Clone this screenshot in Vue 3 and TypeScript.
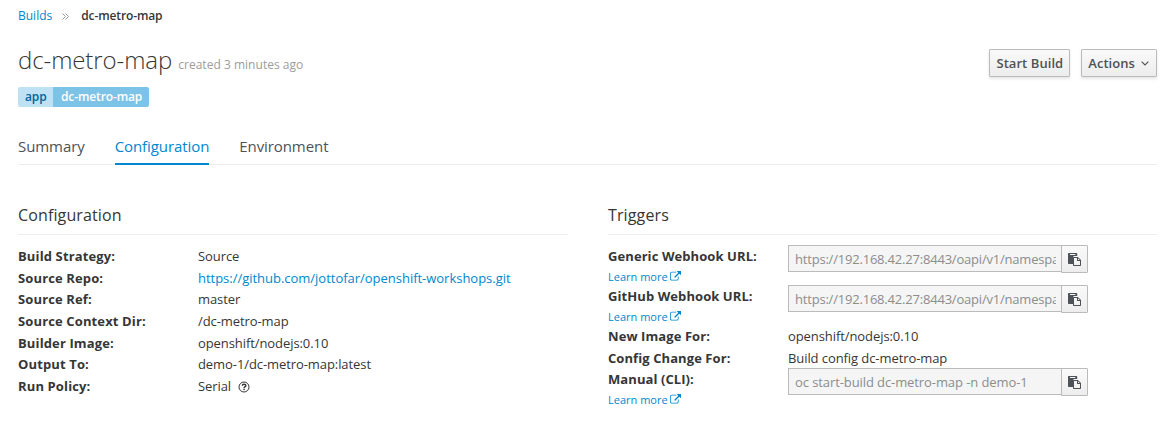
<script setup lang="ts">
interface Detail { label: string; value: string; link?: boolean; help?: boolean }
interface Trigger { label: string; value: string; copy?: boolean; url?: boolean }

const tabs: string[] = ['Summary', 'Configuration', 'Environment']
const activeTab = 'Configuration'

const details: Detail[] = [
  { label: 'Build Strategy:', value: 'Source' },
  { label: 'Source Repo:', value: 'https://github.com/jottofar/openshift-workshops.git', link: true },
  { label: 'Source Ref:', value: 'master' },
  { label: 'Source Context Dir:', value: '/dc-metro-map' },
  { label: 'Builder Image:', value: 'openshift/nodejs:0.10' },
  { label: 'Output To:', value: 'demo-1/dc-metro-map:latest' },
  { label: 'Run Policy:', value: 'Serial', help: true },
]

const triggers: Trigger[] = [
  { label: 'Generic Webhook URL:', value: 'https://192.168.42.27:8443/oapi/v1/namespaces/demo-1/buildconfigs', copy: true, url: true },
  { label: 'GitHub Webhook URL:', value: 'https://192.168.42.27:8443/oapi/v1/namespaces/demo-1/buildconfigs', copy: true, url: true },
  { label: 'New Image For:', value: 'openshift/nodejs:0.10' },
  { label: 'Config Change For:', value: 'Build config dc-metro-map' },
  { label: 'Manual (CLI):', value: 'oc start-build dc-metro-map -n demo-1', copy: true },
]
</script>

<template>
  <main class="page">
    <nav class="breadcrumb">
      <a class="link">Builds</a>
      <svg class="separator" viewBox="0 0 7 7"><path d="M.5.5l3 3-3 3M3.500.5l3 3-3 3" /></svg>
      <strong>dc-metro-map</strong>
    </nav>

    <header class="header">
      <h1>dc-metro-map <small>created 3 minutes ago</small></h1>
      <div class="actions">
        <button class="btn">Start Build</button>
        <button class="btn">Actions
          <svg class="caret" viewBox="0 0 8 5"><path d="M.6.6L4 4 7.400.6" /></svg>
        </button>
      </div>
    </header>

    <div class="label"><span class="label-key">app</span><span class="label-value">dc-metro-map</span></div>

    <ul class="tabs">
      <li v-for="tab in tabs" :key="tab" :class="{ active: tab === activeTab }">{{ tab }}</li>
    </ul>

    <div class="columns">
      <section>
        <h2>Configuration</h2>
        <dl class="details">
          <div v-for="item in details" :key="item.label" class="row">
            <dt>{{ item.label }}</dt>
            <dd>
              <a v-if="item.link" class="link repo">{{ item.value }}</a>
              <template v-else>{{ item.value }}</template>
              <svg v-if="item.help" class="help" viewBox="0 0 12 12">
                <circle cx="6" cy="6" r="5" />
                <path class="hook" d="M4.200 4.800C4.300 3.700 5 3.300 6 3.300c1.100 0 1.900.5 1.900 1.400C7.900 5.700 6.300 5.700 6.100 7" />
                <rect x="5.300" y="7.700" width="1.500" height="1.400" />
              </svg>
            </dd>
          </div>
        </dl>
      </section>

      <section>
        <h2>Triggers</h2>
        <dl>
          <div v-for="item in triggers" :key="item.label" class="row">
            <dt>
              {{ item.label }}
              <a v-if="item.copy" class="link learn">Learn more
                <svg class="external" viewBox="0 0 1792 1792"><path d="M1408 928v320q0 119-84.500 203.500t-203.500 84.500h-832q-119 0-203.500-84.500t-84.500-203.500v-832q0-119 84.500-203.500t203.500-84.500h704q14 0 23 9t9 23v64q0 14-9 23t-23 9h-704q-66 0-113 47t-47 113v832q0 66 47 113t113 47h832q66 0 113-47t47-113v-320q0-14 9-23t23-9h64q14 0 23 9t9 23zm384-864v512q0 26-19 45t-45 19-45-19l-176-176-652 652q-10 10-23 10t-23-10l-114-114q-10-10-10-23t10-23l652-652-176-176q-19-19-19-45t19-45 45-19h512q26 0 45 19t19 45z" /></svg>
              </a>
            </dt>
            <dd>
              <div v-if="item.copy" class="copy">
                <input type="text" readonly :class="{ url: item.url }" :value="item.value">
                <button class="copy-btn" aria-label="Copy">
                  <svg viewBox="0 0 13 13"><path fill-rule="evenodd" d="M.7 0h7.800q.7 0 .7.7V3H6.200q-.9 0-.9.900V11H.7Q0 11 0 10.300V.7Q0 0 .7 0zM2 1v1h5.300V1z" /><path fill-rule="evenodd" d="M5.700 4h4.200L13 7.100v5.200q0 .7-.7.700H5.700q-.7 0-.7-.7V4.700Q5 4 5.700 4zM6 5v7h6V8H9V5zM10 5.300V7h1.700z" /></svg>
                </button>
              </div>
              <template v-else>{{ item.value }}</template>
            </dd>
          </div>
        </dl>
      </section>
    </div>
  </main>
</template>

<style>
body { background: #fff; overflow: hidden; }
</style>

<style scoped>
* { box-sizing: border-box; }
.page {
  height: 421px;
  padding: 6px 11px 0 18px;
  color: #363636;
  font: 13px/1.66667 "Open Sans", sans-serif;
}
.link { color: #0088ce; }
.breadcrumb { display: flex; align-items: center; height: 20px; font-size: 12px; }
.breadcrumb strong { font-weight: 600; letter-spacing: -.12px; }
.separator { width: 7px; height: 7px; margin: 1px 12px 0 10px; fill: none; stroke: #9c9c9c; }
.header { display: flex; justify-content: space-between; height: 61px; padding-top: 19px; }
h1 { margin: 0; font-size: 24px; font-weight: 300; line-height: 29px; white-space: nowrap; letter-spacing: -.09px; }
h1 small { color: #9c9c9c; font-size: 12px; font-weight: 400; letter-spacing: .02px; }
.actions { display: flex; gap: 11px; padding-top: 4px; }
.btn {
  display: flex; align-items: center; height: 28px; padding: 0 6px;
  border: 1px solid #bbb; border-radius: 1px;
  background: linear-gradient(#fafafa, #ededed);
  box-shadow: 0 2px 3px rgba(3, 3, 3, .1);
  color: #4d5258; font: 600 13px/20px "Open Sans", sans-serif; letter-spacing: .06px;
}
.caret { width: 8px; height: 5px; margin: 1px 1px 0 6px; fill: none; stroke: #4d5258; stroke-width: 1.100; }
.label { display: flex; width: fit-content; height: 20px; font-size: 12px; font-weight: 600; line-height: 19px; border-radius: 2px; overflow: hidden; letter-spacing: -.12px; }
.label-key { width: 35px; padding-left: 7px; background: #bee1f4; color: #00659c; }
.label-value { width: 96px; padding-left: 8px; background: #7dc3e8; color: #fff; }
.tabs { display: flex; gap: 30px; height: 38px; margin: 20px 0 0; padding: 0; border-bottom: 1px solid #ededed; list-style: none; font-size: 15px; line-height: 39px; color: #4d5258; letter-spacing: -.08px; }
.tabs li { height: 38px; }
.tabs .active { color: #0088ce; border-bottom: 2px solid #0088ce; }
.columns { display: grid; grid-template-columns: 550px 549px; gap: 40px; margin-top: 38px; }
h2 { height: 32px; margin: 0 0 11.067px; border-bottom: 1px solid #ededed; font-size: 16px; font-weight: 400; line-height: 25px; letter-spacing: .13px; }
dl, dd { margin: 0; }
.row { display: grid; grid-template-columns: 180px 1fr; }
dt { font-weight: 700; letter-spacing: .08px; }
.details dt { letter-spacing: .13px; }
dd { letter-spacing: -.08px; }
.repo { letter-spacing: -.02px; }
.learn { display: block; font-size: 11px; font-weight: 400; letter-spacing: 0; }
.external { width: 11px; height: 11px; fill: currentColor; vertical-align: -1px; }
.help { width: 12px; height: 12px; margin-left: 6.500px; vertical-align: -2px; fill: #363636; }
.help circle, .help .hook { fill: none; stroke: #363636; stroke-width: 1; }
.help .hook { stroke-width: 1.400; }
.copy { display: flex; height: 21.667px; margin-top: -1px; }
input {
  width: 274px; height: 27px; padding: 1px 6px 0; border: 1px solid #bbb; border-right: 0; border-radius: 0; outline: 0;
  background: #f5f5f5; color: #8b8d8f; font: 13px/20px "Open Sans", sans-serif; letter-spacing: -.09px;
}
input.url { letter-spacing: -.2px; }
.copy-btn { display: grid; place-items: center; width: 27px; height: 28px; margin-left: -1px; padding: 0; border: 1px solid #bbb; border-radius: 0 1px 1px 0; background: linear-gradient(#fafafa, #ededed); }
.copy-btn svg { width: 13px; height: 13px; fill: #4d5258; }
</style>
